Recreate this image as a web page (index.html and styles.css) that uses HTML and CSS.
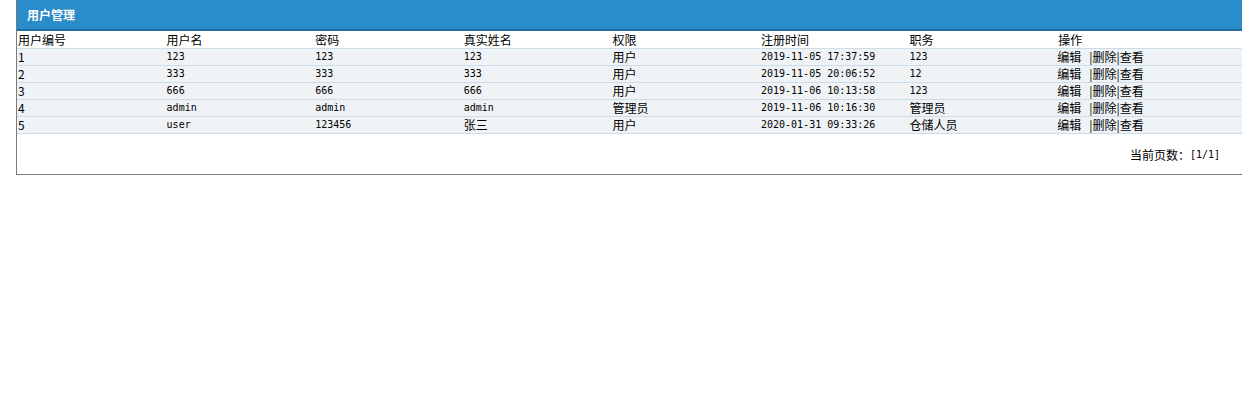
FILE: index.html
```html
<!DOCTYPE html>
<html lang="zh">
<head>
<meta charset="utf-8">
<title>用户管理</title>
<link rel="stylesheet" href="styles.css">
</head>
<body>
<div class="panel">
  <div class="title">用户管理</div>
  <div class="grid">
    <div class="row head">
      <div class="c">用户编号</div><div class="c">用户名</div><div class="c">密码</div><div class="c">真实姓名</div><div class="c">权限</div><div class="c">注册时间</div><div class="c">职务</div><div class="c">操作</div>
    </div>
    <div class="row">
      <div class="c">1</div><div class="c m">123</div><div class="c m">123</div><div class="c m">123</div><div class="c">用户</div><div class="c m">2019-11-05 17:37:59</div><div class="c m">123</div><div class="c ops"><span>编辑</span><span class="sep">|删除</span><span>|查看</span></div>
    </div>
    <div class="row">
      <div class="c">2</div><div class="c m">333</div><div class="c m">333</div><div class="c m">333</div><div class="c">用户</div><div class="c m">2019-11-05 20:06:52</div><div class="c m">12</div><div class="c ops"><span>编辑</span><span class="sep">|删除</span><span>|查看</span></div>
    </div>
    <div class="row">
      <div class="c">3</div><div class="c m">666</div><div class="c m">666</div><div class="c m">666</div><div class="c">用户</div><div class="c m">2019-11-06 10:13:58</div><div class="c m">123</div><div class="c ops"><span>编辑</span><span class="sep">|删除</span><span>|查看</span></div>
    </div>
    <div class="row">
      <div class="c">4</div><div class="c m">admin</div><div class="c m">admin</div><div class="c m">admin</div><div class="c">管理员</div><div class="c m">2019-11-06 10:16:30</div><div class="c">管理员</div><div class="c ops"><span>编辑</span><span class="sep">|删除</span><span>|查看</span></div>
    </div>
    <div class="row">
      <div class="c">5</div><div class="c m">user</div><div class="c m">123456</div><div class="c">张三</div><div class="c">用户</div><div class="c m">2020-01-31 09:33:26</div><div class="c">仓储人员</div><div class="c ops"><span>编辑</span><span class="sep">|删除</span><span>|查看</span></div>
    </div>
  </div>
  <div class="pager">当前页数：<span class="m">[1/1]</span></div>
</div>
</body>
</html>
```
FILE: styles.css
```css
html, body {
  margin: 0;
  padding: 0;
  background: #ffffff;
  overflow: hidden;
}
body {
  font-family: "Noto Sans CJK SC", "DejaVu Sans", sans-serif;
  font-size: 12px;
  color: #000000;
}
.panel {
  margin-left: 16px;
  width: 1240px;
  border-left: 1px solid #7a7a7a;
  border-bottom: 1px solid #7a7a7a;
}
.title {
  height: 29px;
  line-height: 30px;
  background: #2a8cc8;
  border-bottom: 2px solid #1d6d9e;
  color: #ffffff;
  font-weight: bold;
  font-size: 12px;
  padding-left: 10px;
}
.grid {
  display: flex;
  flex-direction: column;
  padding-top: 1px;
}
.row {
  display: grid;
  grid-template-columns: repeat(7, 148.6px) 1fr;
  height: 16px;
  line-height: 16px;
  border-bottom: 1px solid #cadde9;
  background: #eff3f6;
}
.row.head {
  background: #ffffff;
}
.c {
  padding-left: 1px;
  white-space: nowrap;
  overflow: hidden;
}
.m {
  font-family: "DejaVu Sans Mono", "Liberation Mono", monospace;
  font-size: 10px;
}
.ops {
  padding-left: 0;
}
.ops .sep {
  margin-left: 8px;
}
.pager {
  height: 40px;
  display: flex;
  align-items: center;
  justify-content: flex-end;
  padding-right: 37px;
}
.pager .m {
  font-size: 10px;
}
```
